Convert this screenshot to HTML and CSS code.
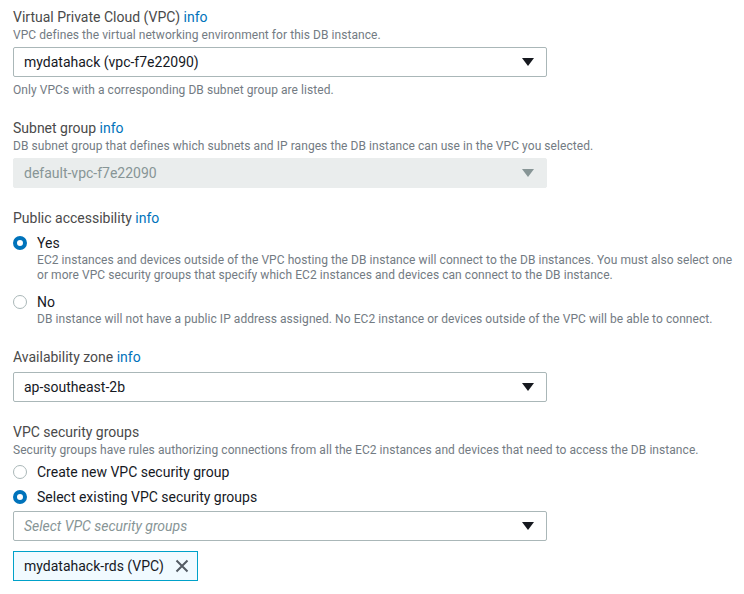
FILE: index.html
```html
<!DOCTYPE html>
<html lang="en">
<head>
<meta charset="utf-8">
<title>Network &amp; Security</title>
<link rel="stylesheet" href="styles.css">
</head>
<body>
<div class="form">
  <div class="field">
    <div class="label">Virtual Private Cloud (VPC) <a class="info">info</a></div>
    <div class="desc">VPC defines the virtual networking environment for this DB instance.</div>
    <div class="select"><span class="value">mydatahack (vpc-f7e22090)</span><span class="caret"></span></div>
    <div class="hint">Only VPCs with a corresponding DB subnet group are listed.</div>
  </div>

  <div class="field">
    <div class="label">Subnet group <a class="info">info</a></div>
    <div class="desc">DB subnet group that defines which subnets and IP ranges the DB instance can use in the VPC you selected.</div>
    <div class="select disabled"><span class="value">default-vpc-f7e22090</span><span class="caret"></span></div>
  </div>

  <div class="field">
    <div class="label">Public accessibility <a class="info">info</a></div>
    <div class="radio checked"><span class="dot"></span><span class="rlabel">Yes</span></div>
    <div class="rdesc">EC2 instances and devices outside of the VPC hosting the DB instance will connect to the DB instances. You must also select one or more VPC security groups that specify which EC2 instances and devices can connect to the DB instance.</div>
    <div class="radio second"><span class="dot"></span><span class="rlabel">No</span></div>
    <div class="rdesc">DB instance will not have a public IP address assigned. No EC2 instance or devices outside of the VPC will be able to connect.</div>
  </div>

  <div class="field">
    <div class="label">Availability zone <a class="info">info</a></div>
    <div class="select az"><span class="value">ap-southeast-2b</span><span class="caret"></span></div>
  </div>

  <div class="field">
    <div class="label">VPC security groups</div>
    <div class="desc">Security groups have rules authorizing connections from all the EC2 instances and devices that need to access the DB instance.</div>
    <div class="radio tight"><span class="dot"></span><span class="rlabel">Create new VPC security group</span></div>
    <div class="radio tight checked"><span class="dot"></span><span class="rlabel">Select existing VPC security groups</span></div>
    <div class="select"><span class="value placeholder">Select VPC security groups</span><span class="caret"></span></div>
    <div class="token">
      <span class="tlabel">mydatahack-rds (VPC)</span>
      <svg class="x" width="14" height="14" viewBox="0 0 14 14"><path d="M1.5 1.5 L12.5 12.5 M12.5 1.5 L1.5 12.5" stroke="#545b64" stroke-width="2" fill="none"/></svg>
    </div>
  </div>
</div>
</body>
</html>
```

FILE: styles.css
```css
html, body {
  margin: 0;
  padding: 0;
  background: #ffffff;
}
body {
  font-family: Roboto, "Liberation Sans", sans-serif;
  color: #444444;
}
.form {
  padding: 7px 8px 0 13px;
  display: flex;
  flex-direction: column;
  gap: 20px;
}
.field {
  display: flex;
  flex-direction: column;
}
.label {
  font-size: 14px;
  line-height: 20px;
  color: #4a4a4a;
}
.info {
  color: #0073bb;
  text-decoration: none;
}
.desc {
  font-size: 12px;
  line-height: 16px;
  letter-spacing: 0.06px;
  color: #737b83;
}
.select {
  margin-top: 4px;
  width: 534px;
  height: 30px;
  box-sizing: border-box;
  border: 1px solid #aab7b8;
  border-radius: 2px;
  display: flex;
  align-items: center;
  justify-content: space-between;
  padding: 0 12px 0 10px;
  font-size: 14px;
  color: #16191f;
}
.select.az {
  margin-top: 5px;
}
.select.disabled {
  background: #eaeded;
  border-color: #eaeded;
  color: #879596;
}
.placeholder {
  font-style: italic;
  color: #879596;
}
.caret {
  width: 0;
  height: 0;
  border-left: 6px solid transparent;
  border-right: 6px solid transparent;
  border-top: 8px solid #16191f;
}
.disabled .caret {
  border-top-color: #879596;
}
.hint {
  margin-top: 5px;
  font-size: 12px;
  line-height: 16px;
  letter-spacing: 0.06px;
  color: #737b83;
}
.radio {
  margin-top: 5px;
  display: flex;
  align-items: center;
  height: 20px;
  font-size: 14px;
  color: #16191f;
}
.radio.second {
  margin-top: 9px;
}
.radio.tight {
  margin-top: 4px;
}
.radio.tight + .radio.tight {
  margin-top: 5px;
}
.dot {
  width: 14px;
  height: 14px;
  box-sizing: border-box;
  border-radius: 50%;
  border: 1px solid #aab7b8;
  background: #fff;
  margin-right: 10px;
}
.radio.checked .dot {
  border: 4px solid #0073bb;
}
.rdesc {
  padding-left: 24px;
  font-size: 12px;
  line-height: 15px;
  letter-spacing: 0.06px;
  color: #737b83;
}
.token {
  margin-top: 10px;
  align-self: flex-start;
  height: 30px;
  box-sizing: border-box;
  border: 1px solid #00a1c9;
  background: #f1faff;
  display: flex;
  align-items: center;
  padding: 0 8px 0 10px;
  gap: 11px;
  font-size: 14px;
  color: #16191f;
}
.x {
  display: block;
}
```
